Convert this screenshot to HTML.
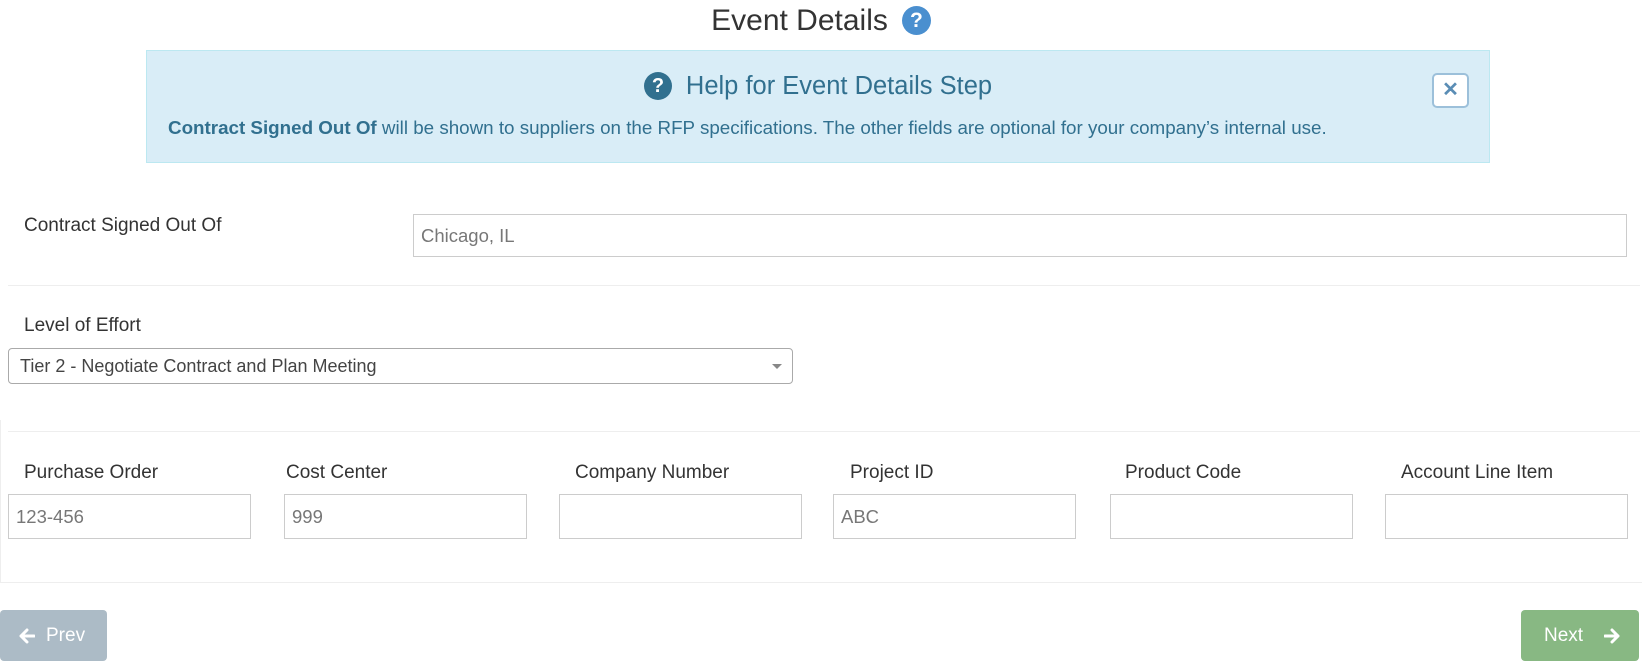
<!DOCTYPE html>
<html><head><meta charset="utf-8"><style>
*{box-sizing:border-box;margin:0;padding:0}
body{width:1642px;height:670px;background:#fff;font-family:"Liberation Sans",sans-serif;color:#333;position:relative;overflow:hidden}
.a{position:absolute}
.title{left:0;width:1642px;top:4px;text-align:center;font-size:30px;color:#333}
.qi{display:inline-block;width:29px;height:29px;border-radius:50%;background:#4a8fcf;color:#fff;font-weight:bold;font-size:21px;line-height:29px;text-align:center;vertical-align:3px;margin-left:14px}
.alert{left:146px;top:50px;width:1344px;height:113px;background:#d9edf7;border:1px solid #bce8f1;color:#31708f}
.alert h2{position:absolute;left:0;right:0;top:21px;text-align:center;font-weight:normal;font-size:25.5px}
.alert h2 .qi{background:#31708f;width:28px;height:28px;line-height:28px;font-size:20px;margin:0 14px 0 0;vertical-align:2px}
.alert p{position:absolute;left:21px;top:66px;font-size:18.8px;white-space:nowrap}
.close{left:1285px;top:22px;width:37px;height:35px;background:#fff;border:2px solid #9cc0da;border-radius:5px;color:#5a8db5;text-align:center;font-weight:bold;font-size:20px;line-height:30px}
.lbl{font-size:19px;color:#333}
.inp{border:1px solid #ccc;background:#fff;font-size:18.5px;color:#777;padding-left:7px}
.hr{left:8px;width:1632px;height:1px;background:#eee}
.btn{color:#fff;font-size:19px;border-radius:4px;line-height:51px;height:51px}
.btn svg{position:absolute;top:18px}
</style></head><body>
<div class="a title">Event Details<span class="qi">?</span></div>
<div class="a alert">
<h2><span class="qi">?</span>Help for Event Details Step</h2>
<p><b>Contract Signed Out Of</b> will be shown to suppliers on the RFP specifications. The other fields are optional for your company’s internal use.</p>
<div class="a close">✕</div>
</div>
<div class="a lbl" style="left:24px;top:215px">Contract Signed Out Of</div>
<div class="a inp" style="left:413px;top:214px;width:1214px;height:43px;line-height:41px">Chicago, IL</div>
<div class="a hr" style="top:285px"></div>
<div class="a lbl" style="left:24px;top:315px">Level of Effort</div>
<div class="a" style="left:8px;top:348px;width:785px;height:36px;border:1px solid #aaa;border-radius:4px;font-size:18px;line-height:34px;padding-left:11px;color:#444">Tier 2 - Negotiate Contract and Plan Meeting<span class="a" style="right:10px;top:15px;width:0;height:0;border-left:5px solid transparent;border-right:5px solid transparent;border-top:5px solid #888"></span></div>
<div class="a hr" style="top:431px"></div>
<div class="a lbl" style="left:24px;top:462px">Purchase Order</div>
<div class="a lbl" style="left:286px;top:462px">Cost Center</div>
<div class="a lbl" style="left:575px;top:462px">Company Number</div>
<div class="a lbl" style="left:850px;top:462px">Project ID</div>
<div class="a lbl" style="left:1125px;top:462px">Product Code</div>
<div class="a lbl" style="left:1401px;top:462px">Account Line Item</div>
<div class="a inp" style="left:8px;top:494px;width:243px;height:45px;line-height:43px">123-456</div>
<div class="a inp" style="left:284px;top:494px;width:243px;height:45px;line-height:43px">999</div>
<div class="a inp" style="left:559px;top:494px;width:243px;height:45px"></div>
<div class="a inp" style="left:833px;top:494px;width:243px;height:45px;line-height:43px">ABC</div>
<div class="a inp" style="left:1110px;top:494px;width:243px;height:45px"></div>
<div class="a inp" style="left:1385px;top:494px;width:243px;height:45px"></div>
<div class="a hr" style="top:582px;left:0;width:1642px"></div>
<div class="a" style="left:0;top:420px;width:1px;height:162px;background:#eee"></div>
<div class="a btn" style="left:0;top:610px;width:107px;background:#acbbc6"><svg style="left:18px" width="17" height="16" viewBox="0 0 17 16"><path d="M16 8H3M9 2L3 8l6 6" stroke="#fff" stroke-width="3" fill="none" stroke-linecap="round" stroke-linejoin="round"/></svg><span class="a" style="left:46px">Prev</span></div>
<div class="a btn" style="left:1521px;top:610px;width:118px;background:#88b883"><span class="a" style="left:23px">Next</span><svg style="left:83px" width="17" height="16" viewBox="0 0 17 16"><path d="M1 8h13M8 2l6 6-6 6" stroke="#fff" stroke-width="3" fill="none" stroke-linecap="round" stroke-linejoin="round"/></svg></div>
</body></html>
